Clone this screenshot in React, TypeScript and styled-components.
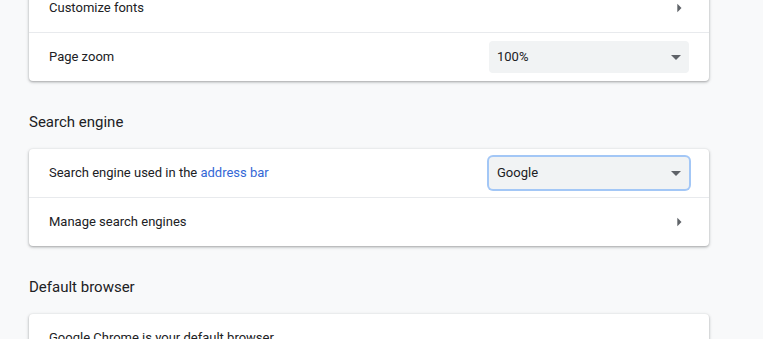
import React from "react";
import styled, { createGlobalStyle } from "styled-components";

const GlobalStyle = createGlobalStyle`
  html, body {
    margin: 0;
    padding: 0;
    background: #f8f9fa;
    font-family: Roboto, "Noto Sans", sans-serif;
    color: #202124;
    overflow: hidden;
  }
`;

const Page = styled.div`
  width: 680px;
  margin-left: 29px;
  margin-top: -16px;
`;

const Card = styled.div`
  background: #fff;
  border-radius: 4px;
  box-shadow: 0 1px 2px 0 rgba(60, 64, 67, 0.3), 0 1px 3px 1px rgba(60, 64, 67, 0.15);
`;

const Row = styled.div`
  display: flex;
  align-items: center;
  justify-content: space-between;
  min-height: 48px;
  padding: 0 20px;
  font-size: 13px;
  line-height: 20px;
  color: #202124;
  & + & {
    border-top: 1px solid #e8eaed;
  }
`;

const Label = styled.div`
  font-size: 13px;
`;

const Link = styled.a`
  color: #3367d6;
  text-decoration: none;
`;

const Heading = styled.h2`
  margin: 0;
  padding: 31px 0 17px;
  font-size: 15px;
  font-weight: 400;
  line-height: 20px;
  color: #202124;
`;

const Select = styled.div<{ $focused?: boolean }>`
  box-sizing: border-box;
  width: 200px;
  height: 32px;
  padding: 0 8px;
  display: flex;
  align-items: center;
  justify-content: space-between;
  background: #f1f3f4;
  border-radius: 4px;
  font-size: 13px;
  color: #202124;
  box-shadow: ${(p) => (p.$focused ? "0 0 0 2px rgba(26, 115, 232, 0.4)" : "none")};
`;

const IconBox = styled.div`
  width: 20px;
  height: 20px;
  display: flex;
  align-items: center;
  justify-content: center;
`;

const DropArrow = () => (
  <svg width="10" height="5" viewBox="0 0 10 5">
    <path d="M0 0h10L5 5z" fill="#5f6368" />
  </svg>
);

const SubpageArrow = () => (
  <IconBox>
    <svg width="20" height="20" viewBox="0 0 24 24">
      <path d="M10 17l5-5-5-5v10z" fill="#5f6368" />
    </svg>
  </IconBox>
);

export default function App() {
  return (
    <>
      <GlobalStyle />
      <Page>
        <Card>
          <Row>
            <Label>Customize fonts</Label>
            <SubpageArrow />
          </Row>
          <Row>
            <Label>Page zoom</Label>
            <Select>
              <span>100%</span>
              <DropArrow />
            </Select>
          </Row>
        </Card>

        <Heading>Search engine</Heading>
        <Card>
          <Row>
            <Label>
              Search engine used in the <Link href="#">address bar</Link>
            </Label>
            <Select $focused>
              <span>Google</span>
              <DropArrow />
            </Select>
          </Row>
          <Row>
            <Label>Manage search engines</Label>
            <SubpageArrow />
          </Row>
        </Card>

        <Heading>Default browser</Heading>
        <Card>
          <Row>
            <Label>Google Chrome is your default browser</Label>
          </Row>
        </Card>
      </Page>
    </>
  );
}
